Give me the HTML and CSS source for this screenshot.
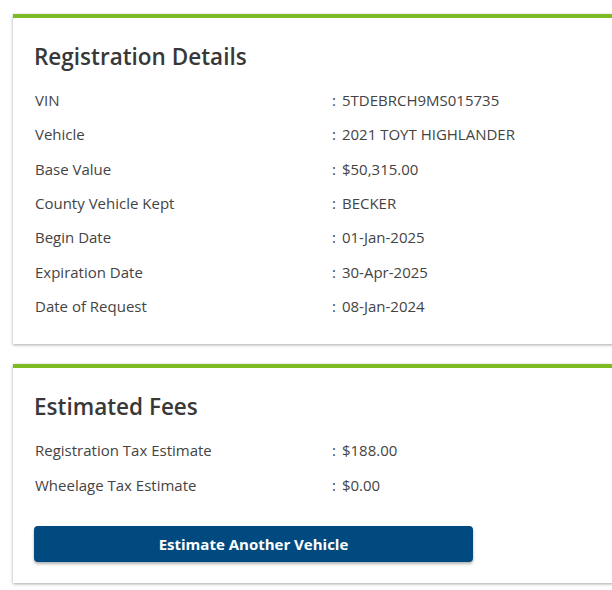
FILE: index.html
```html
<html>
<head>
    <link rel="stylesheet" href="styles.css">
</head>
<body>
    <div class="page">
        <div class="card">
            <h2 class="card-title">Registration Details</h2>
            <div class="detail-list">
                <div class="detail-row"><span class="detail-label">VIN</span><span class="detail-value"><span class="colon">:</span>5TDEBRCH9MS015735</span></div>
                <div class="detail-row"><span class="detail-label">Vehicle</span><span class="detail-value"><span class="colon">:</span>2021 TOYT HIGHLANDER</span></div>
                <div class="detail-row"><span class="detail-label">Base Value</span><span class="detail-value"><span class="colon">:</span>$50,315.00</span></div>
                <div class="detail-row"><span class="detail-label">County Vehicle Kept</span><span class="detail-value"><span class="colon">:</span>BECKER</span></div>
                <div class="detail-row"><span class="detail-label">Begin Date</span><span class="detail-value"><span class="colon">:</span>01-Jan-2025</span></div>
                <div class="detail-row"><span class="detail-label">Expiration Date</span><span class="detail-value"><span class="colon">:</span>30-Apr-2025</span></div>
                <div class="detail-row"><span class="detail-label">Date of Request</span><span class="detail-value"><span class="colon">:</span>08-Jan-2024</span></div>
            </div>
        </div>

        <div class="card">
            <h2 class="card-title">Estimated Fees</h2>
            <div class="detail-list">
                <div class="detail-row"><span class="detail-label">Registration Tax Estimate</span><span class="detail-value"><span class="colon">:</span>$188.00</span></div>
                <div class="detail-row"><span class="detail-label">Wheelage Tax Estimate</span><span class="detail-value"><span class="colon">:</span>$0.00</span></div>
            </div>
            <button class="primary-button">Estimate Another Vehicle</button>
        </div>
    </div>
</body>
</html>
```

FILE: styles.css
```css
html, body {
    overflow: hidden;
}

body {
    margin: 0;
    background: #fff;
    font-family: "Open Sans", "Liberation Sans", sans-serif;
    font-size: 15px;
    color: #444;
}

.page {
    width: 660px;
    padding: 14px 0 0 13px;
    display: flex;
    flex-direction: column;
    gap: 20px;
}

.card {
    background: #fff;
    border-top: 4px solid #7cbb24;
    box-shadow: 0 1px 3px rgba(0, 0, 0, .35);
    padding: 24px 21px 21px;
    display: flex;
    flex-direction: column;
}

.card-title {
    margin: 0 0 11px;
    font-size: 22.5px;
    line-height: 30px;
    font-weight: 600;
    color: #383838;
}

.detail-row {
    display: grid;
    grid-template-columns: 298px 1fr;
    line-height: 34.33px;
}

.detail-label {
    padding-left: 1px;
}

.colon {
    margin-right: 6px;
}

.primary-button {
    margin-top: 24px;
    width: 439px;
    height: 36px;
    padding: 0;
    border: none;
    border-radius: 4px;
    background: #004a80;
    color: #fff;
    font-family: inherit;
    font-size: 15px;
    font-weight: bold;
    box-shadow: 0 2px 3px rgba(0, 0, 0, .3);
    cursor: pointer;
}
```
